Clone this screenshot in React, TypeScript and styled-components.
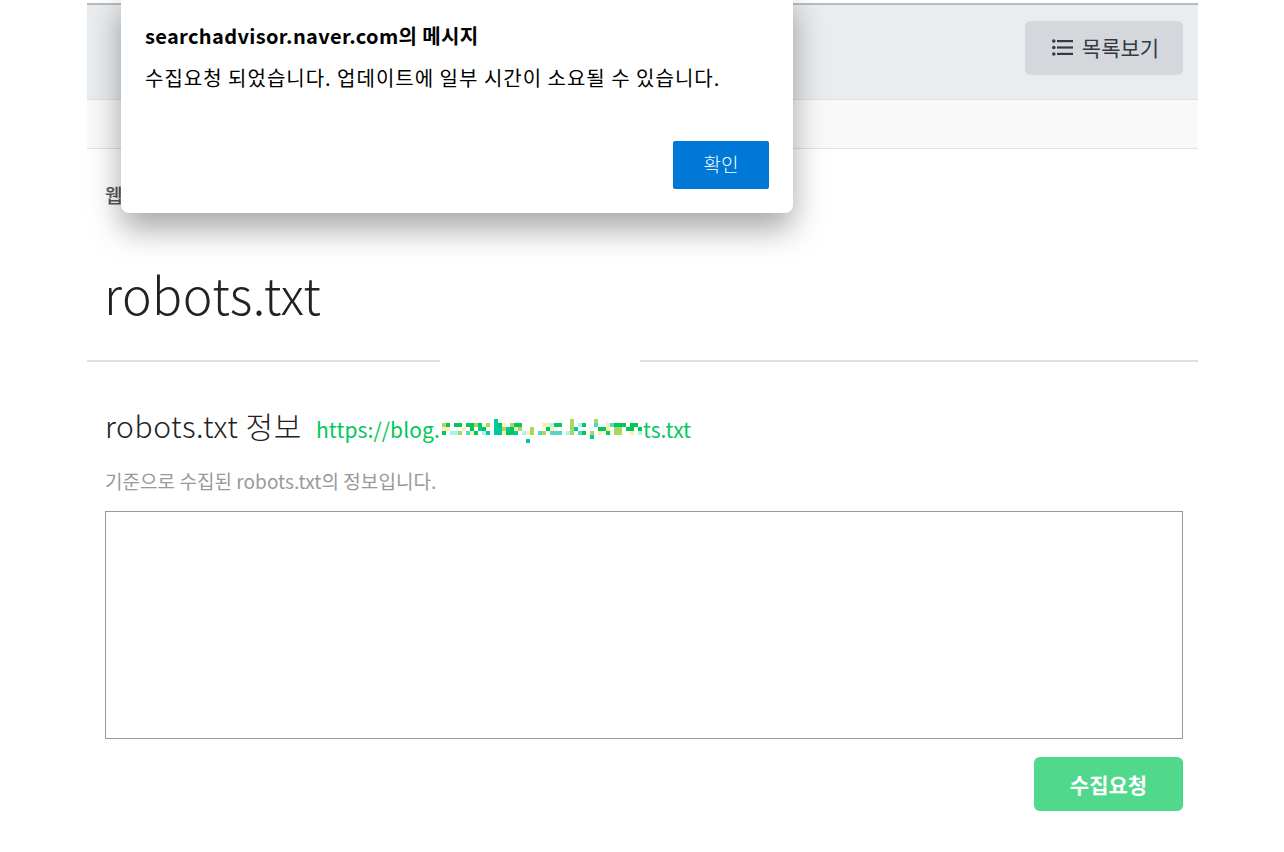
import React from "react";
import styled, { createGlobalStyle } from "styled-components";

const GlobalStyle = createGlobalStyle`
  html, body {
    margin: 0;
    padding: 0;
    height: 100%;
    overflow: hidden;
    background: #fff;
    font-family: "Noto Sans CJK KR", "Noto Sans", sans-serif;
  }
`;

// censored part of the address, one letter per 4px cell
const mosaicColors: Record<string, string> = {
  g: "#03c75a",
  t: "#00c8a0",
  l: "#a8d860",
  y: "#fdeeb0",
  c: "#a8f4f4",
  m: "#50d8c8",
};

const mosaicRows = [
  ".............t..................l.....l...........",
  "lg.gg.gglg.l.tgy.lgg.....yycgg..l.cg..m..ymggg.gg",
  "yy...y.g.tg..ttltgyl..l...gy....lt.....ggy.ll.gg.g",
  "g.ccl.myg.ct.ttyggt.cyl.ml.mmm.cl.mg.l.y.g.ll..y.c",
  ".....................................t............",
  ".....................t............................",
];

const ListIcon = () => (
  <svg width="21" height="17" viewBox="0 0 21 17" fill="none">
    <g fill="#343a40">
      <circle cx="1.8" cy="2" r="1.8" />
      <circle cx="1.8" cy="8.5" r="1.8" />
      <circle cx="1.8" cy="15" r="1.8" />
      <rect x="5" y="1" width="16" height="2.2" />
      <rect x="5" y="7.4" width="16" height="2.2" />
      <rect x="5" y="13.8" width="16" height="2.2" />
    </g>
  </svg>
);

export default function App() {
  return (
    <>
      <GlobalStyle />
      <Page>
        <Container>
          <Header>
            <ListButton>
              <ListIcon />
              목록보기
            </ListButton>
          </Header>
          <SubBar />
          <Content>
            <Breadcrumb>웹마스터 도구</Breadcrumb>
            <PageTitle>robots.txt</PageTitle>
            <Divider>
              <DividerStart />
              <DividerGap />
              <DividerEnd />
            </Divider>
            <Section>
              <TitleRow>
                <SectionTitle>robots.txt 정보</SectionTitle>
                <UrlLink>
                  https://blog.
                  <Mosaic width="200" height="24" viewBox="0 0 200 24">
                    {mosaicRows.flatMap((row, r) =>
                      row.split("").map((cell, c) =>
                        cell === "." ? null : (
                          <rect
                            key={`${r}-${c}`}
                            x={c * 4}
                            y={r * 4}
                            width="4"
                            height="4"
                            fill={mosaicColors[cell]}
                          />
                        ),
                      ),
                    )}
                  </Mosaic>
                  ts.txt
                </UrlLink>
              </TitleRow>
              <Description>기준으로 수집된 robots.txt의 정보입니다.</Description>
              <RobotsBox />
              <Actions>
                <SubmitButton>수집요청</SubmitButton>
              </Actions>
            </Section>
          </Content>
        </Container>
        <Dialog>
          <DialogTitle>searchadvisor.naver.com의 메시지</DialogTitle>
          <DialogText>수집요청 되었습니다. 업데이트에 일부 시간이 소요될 수 있습니다.</DialogText>
          <DialogActions>
            <ConfirmButton>확인</ConfirmButton>
          </DialogActions>
        </Dialog>
      </Page>
    </>
  );
}

const Page = styled.div`
  position: relative;
  width: 1284px;
  height: 852px;
  overflow: hidden;
  padding-left: 87px;
  box-sizing: border-box;
`;

const Container = styled.div`
  width: 1111px;
  padding-top: 3px;
`;

const Header = styled.header`
  display: flex;
  justify-content: flex-end;
  align-items: flex-start;
  height: 97px;
  padding: 16px 15px 0 0;
  box-sizing: border-box;
  background: #e9edf0;
  border-top: 2px solid #bbbbbb;
  border-bottom: 1px solid #dee2e6;
`;

const ListButton = styled.button`
  display: flex;
  align-items: center;
  justify-content: center;
  gap: 9px;
  width: 158px;
  height: 54px;
  padding: 0 0 2px 3px;
  border: 0;
  border-radius: 6px;
  background: #d4d8dc;
  color: #343a40;
  font-family: inherit;
  font-size: 21px;
`;

const SubBar = styled.div`
  height: 49px;
  box-sizing: border-box;
  background: #f9f9f9;
  border-bottom: 1px solid #e0e0e0;
`;

const Content = styled.main`
  padding-top: 34px;
`;

const Breadcrumb = styled.div`
  padding-left: 18px;
  color: #555;
  font-size: 19px;
  font-weight: 500;
  line-height: 24px;
`;

const PageTitle = styled.h1`
  margin: 56px 0 0;
  padding-left: 17px;
  color: #222;
  font-size: 50px;
  font-weight: 300;
  letter-spacing: 0.5px;
  line-height: 60px;
`;

const Divider = styled.div`
  display: flex;
  margin-top: 37px;
`;

const DividerStart = styled.div`
  width: 353px;
  border-top: 2px solid #e0e0e0;
`;

const DividerGap = styled.div`
  width: 200px;
`;

const DividerEnd = styled.div`
  flex: 1;
  border-top: 2px solid #e0e0e0;
`;

const Section = styled.section`
  padding: 43px 15px 0 18px;
`;

const TitleRow = styled.div`
  display: flex;
  align-items: baseline;
  gap: 14px;
`;

const SectionTitle = styled.h2`
  margin: 0;
  color: #222;
  font-size: 30px;
  font-weight: 300;
  letter-spacing: 0.6px;
  line-height: 40px;
`;

const UrlLink = styled.a`
  display: inline-flex;
  align-items: center;
  color: #03c75a;
  font-size: 21px;
  letter-spacing: 0.1px;
`;

const Mosaic = styled.svg`
  display: block;
  margin: 4px 1px 0 2px;
`;

const Description = styled.p`
  margin: 23px 0 0;
  color: #999;
  font-size: 19px;
  letter-spacing: 0.05px;
  line-height: 26px;
`;

const RobotsBox = styled.div`
  height: 228px;
  margin-top: 17px;
  box-sizing: border-box;
  border: 1px solid #999;
`;

const Actions = styled.div`
  display: flex;
  justify-content: flex-end;
  margin-top: 18px;
`;

const SubmitButton = styled.button`
  width: 149px;
  height: 54px;
  border: 1px solid #50d98c;
  border-right-color: #3ad47f;
  border-radius: 6px;
  background: #50d98c;
  color: #fff;
  font-family: inherit;
  font-size: 21px;
  font-weight: 700;
`;

const Dialog = styled.div`
  position: absolute;
  top: -10px;
  left: 121px;
  width: 672px;
  height: 223px;
  padding: 34px 24px 24px;
  box-sizing: border-box;
  display: flex;
  flex-direction: column;
  background: #fff;
  border-radius: 8px;
  box-shadow: 0 16px 32px rgba(0, 0, 0, 0.35);
`;

const DialogTitle = styled.div`
  color: #000;
  font-size: 20px;
  font-weight: 700;
  letter-spacing: 0.35px;
  line-height: 24px;
`;

const DialogText = styled.div`
  margin-top: 17px;
  color: #000;
  font-size: 20px;
  letter-spacing: 1px;
  line-height: 26px;
`;

const DialogActions = styled.div`
  display: flex;
  justify-content: flex-end;
  margin-top: auto;
`;

const ConfirmButton = styled.button`
  width: 96px;
  height: 48px;
  padding: 0 0 4px;
  border: 0;
  border-radius: 2px;
  background: #0078d7;
  color: #fff;
  font-family: inherit;
  font-size: 19px;
  font-weight: 300;
`;
